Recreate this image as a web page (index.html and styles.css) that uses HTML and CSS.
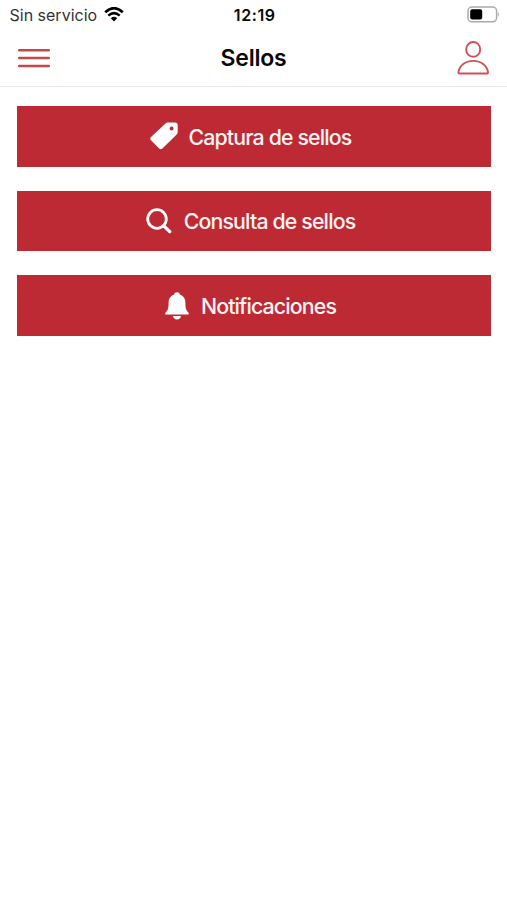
FILE: index.html
```html
<!DOCTYPE html>
<html lang="es">
<head>
<meta charset="utf-8">
<title>Sellos</title>
<link rel="stylesheet" href="styles.css">
</head>
<body>
<div class="status">
  <div class="status-left">
    <span class="carrier">Sin servicio</span>
    <svg class="wifi" viewBox="0 0 20 15" width="20" height="15"><path d="M1.2 5.2Q10-2.8 18.8 5.2" fill="none" stroke="#000" stroke-width="2.7"/><path d="M4.3 8.6Q10 3.6 15.7 8.6" fill="none" stroke="#000" stroke-width="2.5"/><path d="M6.8 11.2Q10 8.3 13.2 11.2L10 14.5Z"/></svg>
  </div>
  <span class="clock">12:19</span>
  <svg class="battery" viewBox="0 0 33 17" width="33" height="17"><rect x="1" y="1" width="28.6" height="14.8" rx="4" fill="none" stroke="#aaa" stroke-width="1.5"/><rect x="3.2" y="3.2" width="12" height="10.4" rx="2"/><path d="M31 6Q33 8.3 31 10.7Z" fill="#aaa"/></svg>
</div>
<header class="navbar">
  <svg class="menu" viewBox="0 0 32 20" width="32" height="20"><path d="M1.2 2.2H30.8M1.2 10.1H30.8M1.2 18H30.8" stroke="#c4474b" stroke-width="2.5" stroke-linecap="round"/></svg>
  <h1 class="title"><span>Sellos</span></h1>
  <svg class="user" viewBox="0 0 32 34" width="32" height="34"><g fill="none" stroke="#cd5257" stroke-width="1.9"><ellipse cx="16.2" cy="8.4" rx="7" ry="7.4"/><path d="M2.2 32.5Q1.4 32.5 1.4 31.5C2 25.2 8 19.9 16.2 19.9S30.4 25.2 31 31.5Q31 32.5 30.2 32.5Z"/></g></svg>
</header>
<main class="actions">
  <button class="action">
    <svg class="tag" viewBox="0 0 28 28" width="28" height="28"><path fill="#fff" fill-rule="evenodd" d="M15.5 1.5Q16.5.5 18 .5H25Q27.7.5 27.7 3.2V9.8Q27.7 11.3 26.7 12.4L12.4 26.5Q10.8 28 9.2 26.5L1 18.3Q-.5 16.6 1 15.1ZM21.6 4.5A2 2 0 1 0 21.6 8.5A2 2 0 1 0 21.6 4.5Z"/></svg>
    <span class="label">Captura de sellos</span>
  </button>
  <button class="action">
    <svg class="search" viewBox="0 0 26 26" width="26" height="26"><circle cx="11" cy="11" r="9.3" fill="none" stroke="#fff" stroke-width="2.8"/><path d="M17.8 17.8L23.7 23.7" stroke="#fff" stroke-width="3.3" stroke-linecap="round"/></svg>
    <span class="label label-search">Consulta de sellos</span>
  </button>
  <button class="action">
    <svg class="bell" viewBox="0 0 24 28" width="24" height="28"><path fill="#fff" d="M8.9 2.7Q9.4.3 12 .3T15.1 2.7C19 4 20.4 7.2 20.4 11C20.4 17 21.4 18.5 23.7 21V22.5H.3V21C2.6 18.5 3.6 17 3.6 11C3.6 7.2 5 4 8.9 2.7ZM8 24H16Q15.4 27.4 12 27.4T8 24Z"/></svg>
    <span class="label label-notify">Notificaciones</span>
  </button>
</main>
</body>
</html>
```
FILE: styles.css
```css
* { box-sizing: border-box; }
body { margin: 0; background: #fff; color: #080808; font-family: Inter, "Liberation Sans", sans-serif; }
svg { display: block; flex: none; }
span { white-space: nowrap; }
.status { display: grid; grid-template-columns: 1fr auto 1fr; height: 30px; padding: 0 7px 0 9.5px; align-items: center; }
.status-left { display: flex; align-items: center; gap: 6.5px; }
.carrier { font-size: 16px; line-height: 30px; color: #333; }
.wifi { margin-top: -1px; }
.clock { font-size: 16px; font-weight: 600; line-height: 30px; letter-spacing: 0.6px; }
.battery { justify-self: end; margin-top: -2px; }
.navbar { display: grid; grid-template-columns: 1fr auto 1fr; align-items: center; height: 57px; padding: 0 18px; border-bottom: 1px solid #e6e6e6; }
.title { margin: 0; font-size: 23px; font-weight: 600; line-height: 28px; letter-spacing: -0.2px; }
.user { justify-self: end; }
.actions { display: flex; flex-direction: column; gap: 24px; padding: 19.4px 16.5px; }
.action { display: flex; align-items: center; justify-content: center; height: 60.4px; padding: 0 6px 0 0; border: 0; background: #bd2a33; color: #fff3f3; font: 450 21.3px/28px Inter, "Liberation Sans", sans-serif; gap: 11px; }
.label { letter-spacing: -0.84px; }
.label-search { margin-left: 1px; }
.label-notify { margin: 2px 0 0 1px; }
.tag { margin-top: -2px; }
.bell { margin-top: 1px; }
```
